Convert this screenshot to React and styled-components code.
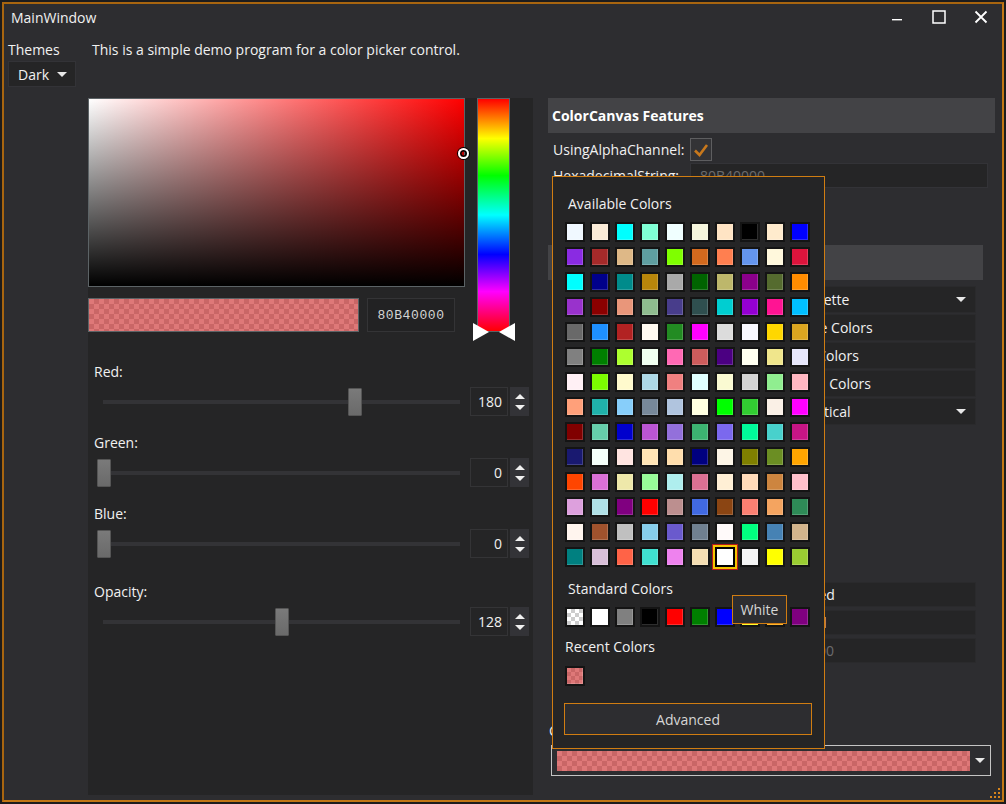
import React from "react";
import styled, { createGlobalStyle, css } from "styled-components";

const AVAILABLE = [
  "aliceblue", "antiquewhite", "aqua", "aquamarine", "azure", "beige", "bisque", "black", "blanchedalmond", "blue",
  "blueviolet", "brown", "burlywood", "cadetblue", "chartreuse", "chocolate", "coral", "cornflowerblue", "cornsilk", "crimson",
  "cyan", "darkblue", "darkcyan", "darkgoldenrod", "darkgray", "darkgreen", "darkkhaki", "darkmagenta", "darkolivegreen", "darkorange",
  "darkorchid", "darkred", "darksalmon", "darkseagreen", "darkslateblue", "darkslategray", "darkturquoise", "darkviolet", "deeppink", "deepskyblue",
  "dimgray", "dodgerblue", "firebrick", "floralwhite", "forestgreen", "fuchsia", "gainsboro", "ghostwhite", "gold", "goldenrod",
  "gray", "green", "greenyellow", "honeydew", "hotpink", "indianred", "indigo", "ivory", "khaki", "lavender",
  "lavenderblush", "lawngreen", "lemonchiffon", "lightblue", "lightcoral", "lightcyan", "lightgoldenrodyellow", "lightgray", "lightgreen", "lightpink",
  "lightsalmon", "lightseagreen", "lightskyblue", "lightslategray", "lightsteelblue", "lightyellow", "lime", "limegreen", "linen", "magenta",
  "maroon", "mediumaquamarine", "mediumblue", "mediumorchid", "mediumpurple", "mediumseagreen", "mediumslateblue", "mediumspringgreen", "mediumturquoise", "mediumvioletred",
  "midnightblue", "mintcream", "mistyrose", "moccasin", "navajowhite", "navy", "oldlace", "olive", "olivedrab", "orange",
  "orangered", "orchid", "palegoldenrod", "palegreen", "paleturquoise", "palevioletred", "papayawhip", "peachpuff", "peru", "pink",
  "plum", "powderblue", "purple", "red", "rosybrown", "royalblue", "saddlebrown", "salmon", "sandybrown", "seagreen",
  "seashell", "sienna", "silver", "skyblue", "slateblue", "slategray", "snow", "springgreen", "steelblue", "tan",
  "teal", "thistle", "tomato", "turquoise", "violet", "wheat", "white", "whitesmoke", "yellow", "yellowgreen",
];

const STANDARD = ["transparent", "white", "gray", "black", "red", "green", "blue", "yellow", "orange", "purple"];

const SLIDERS = [
  { label: "Red:", value: 180 },
  { label: "Green:", value: 0 },
  { label: "Blue:", value: 0 },
  { label: "Opacity:", value: 128, wide: true },
];

// value rows of the ColorPicker section, each control sits after its own label
const PICKER_ROWS = [
  { label: "ColorMode:", value: "ColorPalette", combo: true, indent: 6 },
  { label: "AvailableColorsHeader:", value: "Available Colors", indent: 6 },
  { label: "RecentColorsHeader:", value: "Recent Colors", indent: 6 },
  { label: "StandardColorsHeader:", value: "Standard Colors", indent: 3 },
  { label: "TabOrientation:", value: "Vertical", combo: true, indent: 39 },
];

const LOWER_ROWS = [
  { value: "Advanced", indent: 8 },
  { value: "Standard", indent: 4 },
  { value: "80B40000", muted: true, indent: 6 },
];

const checker = (light, dark, size) => css`
  background-color: ${light};
  background-image: linear-gradient(45deg, ${dark} 25%, transparent 25%, transparent 75%, ${dark} 75%),
    linear-gradient(45deg, ${dark} 25%, transparent 25%, transparent 75%, ${dark} 75%);
  background-size: ${size * 2}px ${size * 2}px;
  background-position: 0 0, ${size}px ${size}px;
`;

const GlobalStyle = createGlobalStyle`
  html, body {
    margin: 0;
    padding: 0;
    background: #1c1c1d;
  }
  body {
    font-family: "Open Sans", "Liberation Sans", sans-serif;
    font-size: 14px;
    color: #f1f1f1;
  }
  * { box-sizing: border-box; }
`;

export default function App() {
  return (
    <Page>
      <GlobalStyle />
      <Window>
        <TitleBar>
          <TitleText>MainWindow</TitleText>
          <WindowButtons>
            <WinButton>
              <svg width="12" height="12" viewBox="0 0 12 12">
                <rect x="1" y="8" width="10" height="1.4" fill="#fff" />
              </svg>
            </WinButton>
            <WinButton>
              <svg width="14" height="14" viewBox="0 0 14 14">
                <rect x="1" y="1" width="12" height="12" fill="none" stroke="#fff" strokeWidth="1.5" />
              </svg>
            </WinButton>
            <WinButton>
              <svg width="14" height="14" viewBox="0 0 14 14">
                <path d="M1.5 1.5 L12.5 12.5 M12.5 1.5 L1.5 12.5" stroke="#fff" strokeWidth="1.8" />
              </svg>
            </WinButton>
          </WindowButtons>
        </TitleBar>

        <Body>
          <ThemesLabel>Themes</ThemesLabel>
          <Intro>This is a simple demo program for a color picker control.</Intro>
          <ThemeCombo>
            <span>Dark</span>
            <Arrow />
          </ThemeCombo>

          <Content>
            <CanvasPanel>
              <CanvasTop>
                <CanvasLeft>
                  <ColorArea>
                    <Marker style={{ left: "100%", top: `${(1 - 180 / 255) * 100}%` }} />
                  </ColorArea>
                  <PreviewRow>
                    <Preview />
                    <HexBox>80B40000</HexBox>
                  </PreviewRow>
                </CanvasLeft>
                <HueColumn>
                  <HueBar />
                  <HueThumb side="left" />
                  <HueThumb side="right" />
                </HueColumn>
              </CanvasTop>

              <Sliders>
                {SLIDERS.map((s) => (
                  <SliderGroup key={s.label} wide={s.wide}>
                    <SliderLabel>{s.label}</SliderLabel>
                    <SliderRow>
                      <Track>
                        <Thumb style={{ left: -6 + (s.value / 255) * 355 }} />
                      </Track>
                      <NumberBox>{s.value}</NumberBox>
                      <Spinner>
                        <SpinArrow dir="up" />
                        <SpinArrow dir="down" />
                      </Spinner>
                    </SliderRow>
                  </SliderGroup>
                ))}
              </Sliders>
            </CanvasPanel>

            <PropsPanel>
              <SectionHeader>ColorCanvas Features</SectionHeader>
              <PropRow first>
                <PropLabel>UsingAlphaChannel:</PropLabel>
                <CheckBox>
                  <svg width="20" height="20" viewBox="0 0 20 20">
                    <path d="M4 10.5 L8.5 15 L16 5" fill="none" stroke="#c8781c" strokeWidth="2.6" />
                  </svg>
                </CheckBox>
              </PropRow>
              <PropRow>
                <PropLabel>HexadecimalString:</PropLabel>
                <TextField muted>80B40000</TextField>
              </PropRow>

              <Section2>
                <SectionHeader>ColorPicker Features</SectionHeader>
                <ListRows>
                  {PICKER_ROWS.map((r) => (
                    <ValueRow key={r.label}>
                      <PropLabel wide />
                      <ValueBox indent={r.indent}>
                        {r.value}
                        {r.combo && <Arrow />}
                      </ValueBox>
                    </ValueRow>
                  ))}
                </ListRows>

                <LowerRows>
                  {LOWER_ROWS.map((r) => (
                    <LowRow key={r.value}>
                      <PropLabel wide />
                      <ValueBox indent={r.indent} muted={r.muted}>
                        {r.value}
                      </ValueBox>
                    </LowRow>
                  ))}
                </LowerRows>
              </Section2>

              <PickerLabel>C</PickerLabel>
              <PickerCombo>
                <PickerSwatch />
                <PickerArrow>
                  <Arrow />
                </PickerArrow>
              </PickerCombo>

              <Popup>
                <PopupHeader>Available Colors</PopupHeader>
                <SwatchGrid>
                  {AVAILABLE.map((c) => (
                    <Swatch key={c} color={c} selected={c === "white"} />
                  ))}
                </SwatchGrid>
                <PopupHeader gap>Standard Colors</PopupHeader>
                <SwatchGrid>
                  {STANDARD.map((c) => (
                    <Swatch key={c} color={c} transparentSwatch={c === "transparent"} />
                  ))}
                </SwatchGrid>
                <PopupHeader recent>Recent Colors</PopupHeader>
                <SwatchGrid>
                  <Swatch recentSwatch />
                </SwatchGrid>
                <AdvancedButton>Advanced</AdvancedButton>
                <Tooltip>White</Tooltip>
              </Popup>
            </PropsPanel>
          </Content>
        </Body>

        <Grip>
          <svg width="12" height="12" viewBox="0 0 12 12">
            {[
              [10, 2], [10, 6], [6, 6], [10, 10], [6, 10], [2, 10],
            ].map(([x, y]) => (
              <rect key={`${x}-${y}`} x={x - 1} y={y - 1} width="2" height="2" fill="#d6841c" />
            ))}
          </svg>
        </Grip>
      </Window>
    </Page>
  );
}

const Page = styled.div`
  width: 1006px;
  height: 804px;
  padding: 2px;
`;

const Window = styled.div`
  position: relative;
  width: 100%;
  height: 100%;
  display: flex;
  flex-direction: column;
  background: #2d2d30;
  border: 2px solid #c27614;
  border-top-color: #a8650f;
  border-left-color: #a8650f;
`;

const TitleBar = styled.div`
  height: 26px;
  display: flex;
  align-items: center;
  justify-content: space-between;
  padding-left: 7px;
`;

const TitleText = styled.div`
  font-size: 14px;
  color: #f1f1f1;
`;

const WindowButtons = styled.div`
  display: flex;
  height: 100%;
`;

const WinButton = styled.div`
  width: 42px;
  height: 100%;
  display: flex;
  align-items: center;
  justify-content: center;
`;

const Body = styled.div`
  flex: 1;
  display: grid;
  grid-template-columns: 80px 1fr;
  grid-template-rows: auto 1fr;
  padding: 11px 7px 5px 4px;
  min-height: 0;
`;

const ThemesLabel = styled.div`
  line-height: 18px;
`;

const Intro = styled.div`
  line-height: 18px;
  padding-left: 4px;
`;

const ThemeCombo = styled.div`
  align-self: start;
  margin-top: 2px;
  width: 68px;
  height: 26px;
  display: flex;
  align-items: center;
  justify-content: space-between;
  padding: 0 8px 0 9px;
  background: #252526;
  border: 1px solid #333337;
`;

const Arrow = styled.span`
  width: 0;
  height: 0;
  border-left: 5px solid transparent;
  border-right: 5px solid transparent;
  border-top: 5px solid #e8e8e8;
`;

const Content = styled.div`
  margin-top: 39px;
  display: grid;
  grid-template-columns: 445px 1fr;
  column-gap: 15px;
  min-height: 0;
`;

const CanvasPanel = styled.div`
  background: #252526;
  display: flex;
  flex-direction: column;
`;

const CanvasTop = styled.div`
  display: flex;
  align-items: flex-start;
`;

const CanvasLeft = styled.div`
  width: 377px;
  display: flex;
  flex-direction: column;
`;

const ColorArea = styled.div`
  position: relative;
  height: 189px;
  border: 1px solid #5c6366;
  background: linear-gradient(to top, #000, rgba(0, 0, 0, 0)),
    linear-gradient(to right, #fff, #ff0000);
`;

const Marker = styled.div`
  position: absolute;
  width: 11px;
  height: 11px;
  margin: -6px 0 0 -6px;
  border-radius: 50%;
  border: 2px solid #fff;
  box-shadow: 0 0 0 1px #000, inset 0 0 0 1.5px #000;
`;

const PreviewRow = styled.div`
  margin-top: 11px;
  display: flex;
  gap: 8px;
`;

const Preview = styled.div`
  width: 271px;
  height: 34px;
  border: 1px solid #5c6366;
  ${checker("#de7878", "#c96666", 5)}
`;

const HexBox = styled.div`
  width: 88px;
  height: 34px;
  display: flex;
  align-items: center;
  justify-content: center;
  background: #222223;
  border: 1px solid #343436;
  font-family: "Liberation Mono", "DejaVu Sans Mono", monospace;
  font-size: 13px;
  letter-spacing: 0.6px;
  color: #d4d4d4;
`;

const HueColumn = styled.div`
  position: relative;
  width: 42px;
  margin-left: 8px;
  height: 243px;
`;

const HueBar = styled.div`
  margin-left: 4px;
  width: 33px;
  height: 234px;
  border: 1px solid #5c6366;
  background: linear-gradient(
    to bottom,
    #ff0000 0%,
    #ffff00 17%,
    #00ff00 33%,
    #00ffff 50%,
    #0000ff 67%,
    #ff00ff 83%,
    #ff0000 100%
  );
`;

const HueThumb = styled.div`
  position: absolute;
  top: 225px;
  width: 0;
  height: 0;
  border-top: 9px solid transparent;
  border-bottom: 9px solid transparent;
  ${({ side }) =>
    side === "left"
      ? css`
          left: 0;
          border-left: 16px solid #fff;
        `
      : css`
          right: 0;
          border-right: 16px solid #fff;
        `}
`;

const Sliders = styled.div`
  margin-top: 22px;
  display: flex;
  flex-direction: column;
`;

const SliderGroup = styled.div`
  margin-top: ${({ wide }) => (wide ? "25px" : "18px")};
  &:first-child {
    margin-top: 0;
  }
`;

const SliderLabel = styled.div`
  line-height: 18px;
  padding-left: 6px;
`;

const SliderRow = styled.div`
  margin-top: 6px;
  height: 29px;
  display: flex;
  align-items: center;
  padding: 0 4px 0 15px;
`;

const Track = styled.div`
  position: relative;
  flex: 1;
  height: 4px;
  background: #333336;
  margin-right: 10px;
`;

const Thumb = styled.div`
  position: absolute;
  top: -12px;
  width: 14px;
  height: 28px;
  background: linear-gradient(to bottom, #7a7a7a, #6a6a6a);
  border: 1px solid #555;
  border-radius: 1px;
`;

const NumberBox = styled.div`
  width: 38px;
  height: 29px;
  display: flex;
  align-items: center;
  justify-content: flex-end;
  padding-right: 5px;
  background: #252526;
  border: 1px solid #343436;
`;

const Spinner = styled.div`
  margin-left: 2px;
  width: 19px;
  height: 29px;
  background: #333337;
  display: flex;
  flex-direction: column;
  align-items: center;
  justify-content: center;
  gap: 6px;
`;

const SpinArrow = styled.span`
  width: 0;
  height: 0;
  border-left: 5px solid transparent;
  border-right: 5px solid transparent;
  ${({ dir }) =>
    dir === "up"
      ? css`
          border-bottom: 5px solid #f0f0f0;
        `
      : css`
          border-top: 5px solid #f0f0f0;
        `}
`;

const PropsPanel = styled.div`
  position: relative;
  display: flex;
  flex-direction: column;
`;

const SectionHeader = styled.div`
  height: 35px;
  display: flex;
  align-items: center;
  padding-left: 4px;
  background: #434346;
  font-weight: 700;
  color: #fff;
`;

const PropRow = styled.div`
  display: flex;
  align-items: center;
  height: 25px;
  margin-top: ${({ first }) => (first ? "4px" : "1px")};
  padding-right: 7px;
`;

const PropLabel = styled.div`
  width: ${({ wide }) => (wide ? "214px" : "142px")};
  padding-left: 5px;
  white-space: nowrap;
  flex-shrink: 0;
`;

const CheckBox = styled.div`
  width: 22px;
  height: 23px;
  border: 1px solid #5e5e60;
  background: #333336;
  display: flex;
  align-items: center;
  justify-content: center;
`;

const TextField = styled.div`
  flex: 1;
  height: 25px;
  display: flex;
  align-items: center;
  padding-left: 9px;
  background: #252526;
  border: 1px solid #333337;
  color: ${({ muted }) => (muted ? "#6c6c6e" : "#f1f1f1")};
`;

const Section2 = styled.div`
  margin-top: 57px;
  width: calc(100% - 12px);
  display: flex;
  flex-direction: column;
`;

const ListRows = styled.div`
  margin-top: 6px;
  display: flex;
  flex-direction: column;
  gap: 1px;
  padding-right: 7px;
`;

const ValueRow = styled.div`
  display: flex;
  align-items: center;
  height: 27px;
`;

const ValueBox = styled.div`
  flex: 1;
  height: 100%;
  display: flex;
  align-items: center;
  justify-content: space-between;
  padding: 0 9px 0 ${({ indent }) => indent}px;
  background: #252526;
  border: 1px solid #2a2a2c;
  color: ${({ muted }) => (muted ? "#6c6c6e" : "#f1f1f1")};
`;

const LowerRows = styled.div`
  margin-top: 157px;
  display: flex;
  flex-direction: column;
  gap: 3px;
  padding-right: 7px;
`;

const LowRow = styled.div`
  display: flex;
  align-items: center;
  height: 25px;
`;

const PickerLabel = styled.div`
  margin-top: 59px;
  line-height: 18px;
  padding-left: 1px;
`;

const PickerCombo = styled.div`
  margin: 5px 4px 0 3px;
  height: 31px;
  display: flex;
  align-items: center;
  padding: 0 0 0 5px;
  border: 1px solid #c4c4c4;
  background: #2d2d30;
`;

const PickerSwatch = styled.div`
  flex: 1;
  height: 20px;
  ${checker("#de7878", "#c96666", 5)}
`;

const PickerArrow = styled.div`
  width: 20px;
  display: flex;
  justify-content: center;
`;

const Popup = styled.div`
  position: absolute;
  left: 4px;
  top: 78px;
  width: 273px;
  height: 573px;
  padding: 17px 12px 12px 12px;
  background: #252526;
  border: 1px solid #d07d12;
  display: flex;
  flex-direction: column;
  z-index: 5;
`;

const PopupHeader = styled.div`
  line-height: 20px;
  padding-left: ${({ recent }) => (recent ? "0" : "3px")};
  margin-top: ${({ gap, recent }) => (gap ? "12px" : recent ? "10px" : "0")};
  margin-bottom: ${({ recent }) => (recent ? "9px" : "8px")};
`;

const SwatchGrid = styled.div`
  display: grid;
  grid-template-columns: repeat(10, 20px);
  grid-auto-rows: 20px;
  gap: 5px;
`;

const Swatch = styled.div`
  width: 20px;
  height: 20px;
  border: 2px solid #141414;
  background: ${({ color }) => color};
  box-shadow: inset -1px -1px 0 rgba(255, 255, 255, 0.18);
  ${({ transparentSwatch }) => transparentSwatch && checker("#ffffff", "#cccccc", 4)}
  ${({ recentSwatch }) => recentSwatch && checker("#de7878", "#c96666", 4)}
  ${({ selected }) =>
    selected &&
    css`
      border-color: #000;
      box-shadow: 0 0 0 2px #f2c400, 0 0 0 3px #b3191b;
    `}
`;

const AdvancedButton = styled.div`
  margin-top: 17px;
  width: 248px;
  height: 32px;
  margin-left: -1px;
  display: flex;
  align-items: center;
  justify-content: center;
  background: #2d2d30;
  border: 1px solid #d07d12;
  color: #d6d6d6;
`;

const Tooltip = styled.div`
  position: absolute;
  left: 179px;
  top: 418px;
  width: 55px;
  height: 29px;
  display: flex;
  align-items: center;
  justify-content: center;
  background: #2d2d30;
  border: 1px solid #d07d12;
  color: #d6d6d6;
  font-size: 14px;
`;

const Grip = styled.div`
  position: absolute;
  right: 1px;
  bottom: 1px;
  width: 12px;
  height: 12px;
  display: flex;
`;
